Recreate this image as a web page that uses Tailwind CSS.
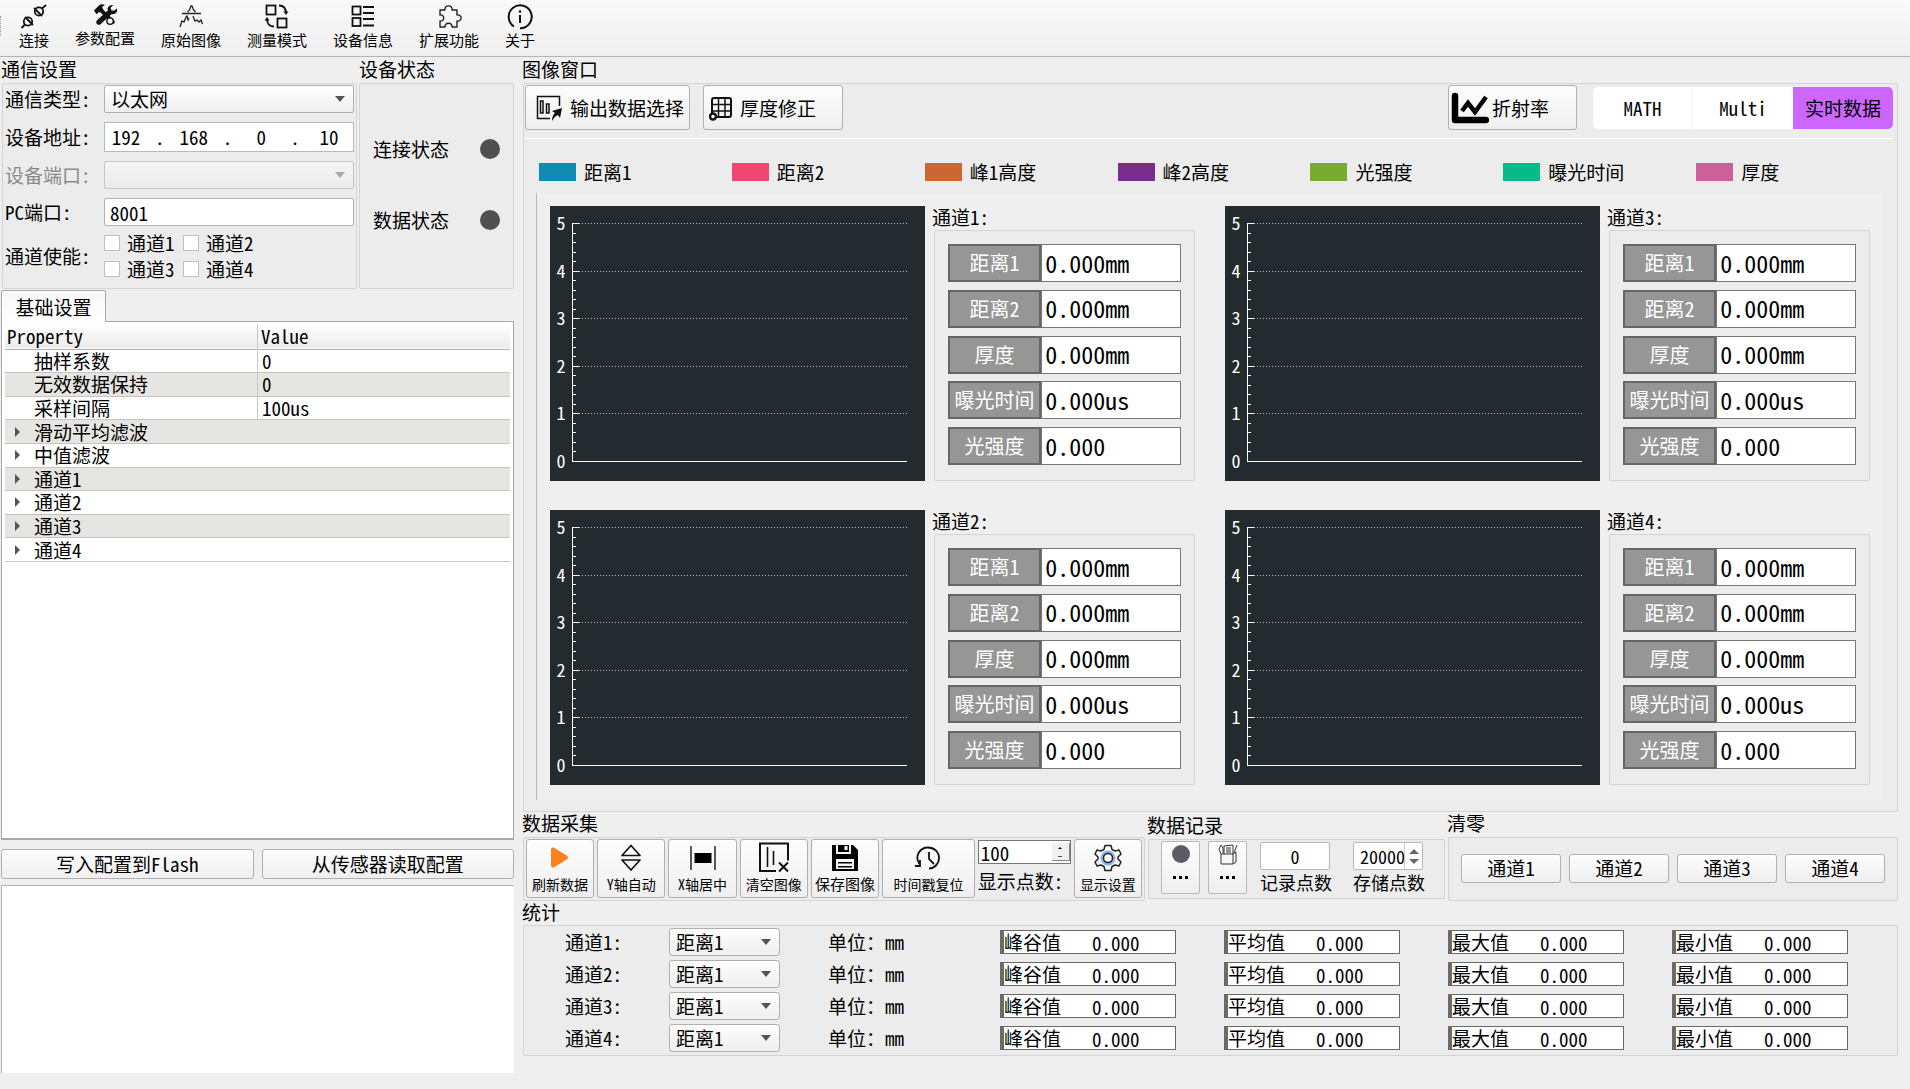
<!DOCTYPE html>
<html lang="zh-CN">
<head>
    <meta charset="UTF-8">
    <meta name="viewport" content="width=device-width, initial-scale=1.0">
    <title>光谱共焦测量</title>
    <script src="https://cdn.jsdelivr.net/npm/@tailwindcss/browser@4"></script>
</head>
<body class="min-h-screen flex flex-col bg-[#efefef] text-black text-[19px] leading-6 font-['Noto_Sans_Mono_CJK_SC','Noto_Sans_CJK_SC',sans-serif]">
    <!-- 顶部工具栏 -->
    <header class="h-[57px] shrink-0 flex items-start gap-[26px] pt-1 pl-[19px] border-b border-[#b4b4b4] bg-linear-to-b from-[#fafafa] to-[#efefef] text-[15px] leading-5 relative">
        <span class="absolute left-0 top-4 h-5 border-l border-dotted border-[#999]"></span>
        <button class="flex flex-col items-center">
            <svg class="w-7 h-[26px]" viewBox="0 0 28 26" fill="none" stroke="#111" stroke-width="1.800">
                <circle cx="19" cy="7.500" r="4.200"/><path d="M22 4.500l4-3.500M14 4l8 8"/>
                <circle cx="8" cy="17.500" r="4.200"/><path d="M5 20.500L1.500 24M5 13l8 8"/>
            </svg>
            连接
        </button>
        <button class="flex flex-col items-center">
            <svg class="w-7 h-6" viewBox="0 0 28 26" fill="#111">
                <path d="M2 7l6-6c2-1 4-1 6 0l-3 2 1 3 12 12c2 2-1 5-3 3L9 9 7 9 5 11z"/>
                <path d="M27 5c1 4-2 7-6 6L10 21c-3 4-8-1-4-4L17 7c-1-4 2-6 6-6l-3 3 1 3 3 0z"/>
                <circle cx="19.500" cy="18.500" r="3.500" fill="#f4f4f4" stroke="#111" stroke-width="1.500"/>
            </svg>
            参数配置
        </button>
        <button class="flex flex-col items-center">
            <svg class="w-7 h-[26px]" viewBox="0 0 28 26" fill="none" stroke="#222" stroke-width="1.300">
                <path d="M5 9.500h19M10.500 8l2-2 1.500-4h1l1.500 4 2 2"/>
                <path d="M3 23l2-6 2 1 2-5 1-1 1 4 1-2M25.500 20l-1.500-4-2 2-2-2-2 1-2-5"/>
            </svg>
            原始图像
        </button>
        <button class="flex flex-col items-center">
            <svg class="w-7 h-[26px]" viewBox="0 0 28 26" fill="none" stroke="#111" stroke-width="1.800">
                <rect x="3.500" y="1.500" width="9" height="9"/><rect x="14.500" y="14.500" width="9" height="9"/>
                <path d="M16 1.500c4 0 7 2 7 8M4 14.500c0 6 3 8 7 8"/><path d="M20.500 7.500h5L23 11zM1.500 16.500h5L4 13z" fill="#111" stroke="none"/>
            </svg>
            测量模式
        </button>
        <button class="flex flex-col items-center">
            <svg class="w-7 h-[26px]" viewBox="0 0 28 26" fill="none" stroke="#111" stroke-width="1.800">
                <rect x="3.500" y="2.500" width="8" height="8"/><rect x="3.500" y="14" width="8" height="8"/>
                <path d="M14 3h11M14 9h11M14 15h11M14 21.500h11"/>
            </svg>
            设备信息
        </button>
        <button class="flex flex-col items-center">
            <svg class="w-7 h-[26px]" viewBox="0 0 28 26" fill="none" stroke="#222" stroke-width="1.400" stroke-linejoin="round">
                <path d="M5 6h5c-1.500-5.500 8.500-5.500 7 0h5v5c5.500-1 5.500 7 0 6v6h-5c1-5-8-5-7 0H5v-6c5 1 5-7 0-6z"/>
            </svg>
            扩展功能
        </button>
        <button class="flex flex-col items-center">
            <svg class="w-7 h-[26px]" viewBox="0 0 28 26" fill="none" stroke="#111" stroke-width="2">
                <path d="M8 22.500A11.500 11.500 0 1 1 14 24.300M5.500 20.500l1.500 1.500"/><path d="M14 11v8"/><circle cx="14" cy="7.500" r="1.300" fill="#111" stroke="none"/>
            </svg>
            关于
        </button>
    </header>

    <main class="flex-1 flex gap-[9px] pr-3">
        <!-- 左侧面板 -->
        <aside class="w-[514px] shrink-0 flex flex-col pl-px pb-4">
            <div class="flex gap-[2px]">
                <section class="w-[356px]">
                    <h2 class="h-[26px]">通信设置</h2>
                    <div class="border border-[#d4d4d4] rounded-xs bg-[#ececec] pt-px pb-[11px] pl-[2px] pr-[2px] ml-px grid grid-cols-[99px_1fr] gap-y-[9px] items-center">
                        <label for="type">通信类型:</label>
                        <div class="relative h-7">
                            <select id="type" class="appearance-none w-full h-full pl-[6px] border border-[#b0b0b0] rounded-xs bg-linear-to-b from-white to-[#efefef]"><option>以太网</option></select>
                            <span class="absolute right-[9px] top-[11px] border-x-[5px] border-x-transparent border-t-[6px] border-t-[#555] pointer-events-none"></span>
                        </div>
                        <label for="ip">设备地址:</label>
                        <div class="h-[30px] flex items-center justify-between pl-px pr-1 border border-[#aebcc4] bg-white">
                            <input id="ip" value="192" class="w-10 text-center outline-none">.
                            <input aria-label="地址段2" value="168" class="w-10 text-center outline-none">.
                            <input aria-label="地址段3" value="0" class="w-10 text-center outline-none">.
                            <input aria-label="地址段4" value="10" class="w-10 text-center outline-none">
                        </div>
                        <label for="port" class="text-[#8a8a8a]">设备端口:</label>
                        <div class="relative h-7">
                            <select id="port" disabled class="appearance-none w-full h-full border border-[#c6c6c6] rounded-xs bg-linear-to-b from-[#f4f4f4] to-[#ececec]"></select>
                            <span class="absolute right-[9px] top-[11px] border-x-[5px] border-x-transparent border-t-[6px] border-t-[#aaa] pointer-events-none"></span>
                        </div>
                        <label for="pcport">PC端口:</label>
                        <input id="pcport" value="8001" class="w-full h-7 pl-[5px] border border-[#b4b4b4] rounded-xs bg-white">
                        <span>通道使能:</span>
                        <div class="h-[42px] grid grid-cols-[79px_79px] content-between leading-4">
                            <label class="flex items-center gap-[7px]"><input type="checkbox" class="appearance-none size-4 shrink-0 border border-[#c0c0c0] bg-white">通道1</label>
                            <label class="flex items-center gap-[7px]"><input type="checkbox" class="appearance-none size-4 shrink-0 border border-[#c0c0c0] bg-white">通道2</label>
                            <label class="flex items-center gap-[7px]"><input type="checkbox" class="appearance-none size-4 shrink-0 border border-[#c0c0c0] bg-white">通道3</label>
                            <label class="flex items-center gap-[7px]"><input type="checkbox" class="appearance-none size-4 shrink-0 border border-[#c0c0c0] bg-white">通道4</label>
                        </div>
                    </div>
                </section>
                <section class="flex-1 flex flex-col">
                    <h2 class="h-[26px]">设备状态</h2>
                    <div class="flex-1 flex flex-col gap-[47px] justify-center border border-[#d4d4d4] rounded-xs bg-[#ececec] px-[13px] pb-[3px]">
                        <div class="flex items-center justify-between">连接状态<span class="size-5 rounded-full bg-[#505050]"></span></div>
                        <div class="flex items-center justify-between">数据状态<span class="size-5 rounded-full bg-[#505050]"></span></div>
                    </div>
                </section>
            </div>

            <div class="mt-px flex"><button class="relative z-10 -mb-px w-[105px] h-8 border border-b-0 border-[#a8a8a8] rounded-t-xs bg-linear-to-b from-[#f8f8f8] to-white">基础设置</button></div>
            <div class="flex-1 border border-[#a8a8a8] border-b-2 bg-white px-[3px] pt-[2px]">
                <table class="w-full h-[238px] border-collapse leading-[22px]">
                    <thead>
                        <tr class="h-[25px] text-left border-b border-[#b0b0b0] bg-linear-to-b from-white to-[#ebebeb]">
                            <th class="w-1/2 p-0 pl-[2px] font-normal border-r border-[#c8c8c8]">Property</th>
                            <th class="p-0 pl-[3px] font-normal">Value</th>
                        </tr>
                    </thead>
                    <tbody id="props"></tbody>
                </table>
            </div>
            <div class="mt-[9px] grid grid-cols-2 gap-2">
                <button class="h-[30px] border border-[#b0b0b0] rounded-[3px] bg-linear-to-b from-[#fdfdfd] to-[#efefef]">写入配置到Flash</button>
                <button class="h-[30px] border border-[#b0b0b0] rounded-[3px] bg-linear-to-b from-[#fdfdfd] to-[#efefef]">从传感器读取配置</button>
            </div>
            <textarea aria-label="日志" class="mt-[6px] h-[188px] resize-none border-t border-l border-[#b0b0b0] bg-white"></textarea>
        </aside>

        <!-- 右侧面板 -->
        <div class="flex-1 min-w-0">
            <h2 class="h-[26px] -ml-px">图像窗口</h2>
            <section class="border border-[#d4d4d4] rounded-xs bg-[#ececec] pb-[11px]">
                <div class="ml-px mr-1 pt-px pb-2 flex items-center border-b border-white leading-[22px]">
                    <button class="h-[45px] w-[165px] flex items-center gap-[8px] pl-[10px] border border-[#b0b0b0] rounded-[3px] bg-linear-to-b from-[#fdfdfd] to-[#efefef] whitespace-nowrap">
                        <svg class="w-[26px] h-[26px] shrink-0" viewBox="0 0 26 26" fill="none" stroke="#111" stroke-width="1.500">
                            <path d="M14 23.500H1.500v-22h22V11"/><rect x="4.500" y="6" width="2.500" height="12"/><rect x="10.500" y="9" width="2.500" height="9"/>
                            <path d="M16 26c0-4 1-6 3-8l-3-2 10-3-2 10-2-3c-3 1-4 3-6 6z" fill="#111" stroke="none"/>
                        </svg>
                        输出数据选择
                    </button>
                    <button class="ml-[13px] h-[45px] w-[140px] flex items-center gap-[7px] pl-[5px] border border-[#b0b0b0] rounded-[3px] bg-linear-to-b from-[#fdfdfd] to-[#efefef]">
                        <svg class="w-6 h-[26px]" viewBox="0 0 24 26" fill="none" stroke="#111" stroke-width="2">
                            <rect x="3" y="3" width="19" height="19" rx="2"/><path d="M9.500 3v19M16 3v19M3 9.500h19M3 16h19" stroke-width="1.500"/>
                            <circle cx="4" cy="21.500" r="3" fill="#fff" stroke-width="2.500"/>
                        </svg>
                        厚度修正
                    </button>
                    <button class="ml-auto h-[45px] w-[129px] flex items-center gap-[3px] pl-[2px] border border-[#b0b0b0] rounded-[3px] bg-linear-to-b from-[#fdfdfd] to-[#efefef]">
                        <svg class="w-[38px] h-8" viewBox="0 0 38 32" fill="none" stroke="#000" stroke-linecap="round">
                            <path d="M4 4v24h31" stroke-width="6.500" stroke-linejoin="round"/><path d="M11 19l6-8 7 9L35 5" stroke-width="4.500" stroke-linecap="butt"/>
                        </svg>
                        折射率
                    </button>
                    <div class="ml-4 w-[300px] h-[42px] grid grid-cols-3 rounded-[5px] overflow-hidden bg-white">
                        <button class="border-r border-[#f2f2f2]">MATH</button>
                        <button>Multi</button>
                        <button class="bg-[#cc66ff]">实时数据</button>
                    </div>
                </div>

                <div class="pl-[15px] pr-2 pt-3 h-[54px] grid grid-cols-7 items-center">
                    <div class="flex items-center gap-2"><span class="w-[37px] h-[18px] bg-[#108bb4]"></span>距离1</div>
                    <div class="flex items-center gap-2"><span class="w-[37px] h-[18px] bg-[#ef476f]"></span>距离2</div>
                    <div class="flex items-center gap-2"><span class="w-[37px] h-[18px] bg-[#cc6633]"></span>峰1高度</div>
                    <div class="flex items-center gap-2"><span class="w-[37px] h-[18px] bg-[#7b2d8e]"></span>峰2高度</div>
                    <div class="flex items-center gap-2"><span class="w-[37px] h-[18px] bg-[#77ac30]"></span>光强度</div>
                    <div class="flex items-center gap-2"><span class="w-[37px] h-[18px] bg-[#06ba8a]"></span>曝光时间</div>
                    <div class="flex items-center gap-2"><span class="w-[37px] h-[18px] bg-[#cc6199]"></span>厚度</div>
                </div>

                <div id="channels" class="ml-3 mr-[14px] px-[13px] pt-[13px] pb-[15px] border-l border-[#b8b8b8] bg-[#efefef] grid grid-cols-2 gap-x-[30px] gap-y-[29px]"></div>
            </section>

            <div class="flex gap-[3px]">
                <section class="w-[622px] shrink-0">
                    <h2 class="h-[25px] leading-[22px] -ml-px">数据采集</h2>
                    <div class="h-16 flex items-start gap-[3px] pt-px px-[2px] border border-[#d4d4d4] rounded-xs bg-[#ececec] text-[14px] leading-5 whitespace-nowrap">
                        <button class="flex-[68] h-[59px] flex flex-col items-center justify-between pt-1 pb-[3px] border border-[#b0b0b0] rounded-[3px] bg-linear-to-b from-[#fdfdfd] to-[#efefef]">
                            <svg class="w-8 h-[28px]" viewBox="0 0 32 28"><path d="M9 5.500l13 8L9 21.500z" fill="#ff7f1e" stroke="#ff7f1e" stroke-width="4" stroke-linejoin="round"/></svg>
                            刷新数据
                        </button>
                        <button class="flex-[68] h-[59px] flex flex-col items-center justify-between pt-1 pb-[3px] border border-[#b0b0b0] rounded-[3px] bg-linear-to-b from-[#fdfdfd] to-[#efefef]">
                            <svg class="w-8 h-[28px]" viewBox="0 0 32 28" fill="none" stroke="#111" stroke-width="1.700" stroke-linejoin="round"><path d="M16 1.500l9 10H7zM7 16h18l-9 10z"/></svg>
                            Y轴自动
                        </button>
                        <button class="flex-[68] h-[59px] flex flex-col items-center justify-between pt-1 pb-[3px] border border-[#b0b0b0] rounded-[3px] bg-linear-to-b from-[#fdfdfd] to-[#efefef]">
                            <svg class="w-8 h-[28px]" viewBox="0 0 32 28"><path d="M4 2v24M28 2v24" stroke="#222" stroke-width="1.500"/><path d="M7.500 9h17v10h-17z"/></svg>
                            X轴居中
                        </button>
                        <button class="flex-[68] h-[59px] flex flex-col items-center justify-between pt-[2px] pb-[3px] border border-[#b0b0b0] rounded-[3px] bg-linear-to-b from-[#fdfdfd] to-[#efefef]">
                            <svg class="w-8 h-[31px]" viewBox="0 0 32 31" fill="none" stroke="#111" stroke-width="2"><path d="M18 29H2V1.500h28v17"/><path d="M9.500 5v20M15.500 9v14" stroke-width="1.600"/><path d="M21 20.500l9 9M30 20.500l-9 9"/></svg>
                            清空图像
                        </button>
                        <button class="flex-[68] h-[59px] flex flex-col items-center justify-between pt-1 pb-[3px] border border-[#b0b0b0] rounded-[3px] bg-linear-to-b from-[#fdfdfd] to-[#efefef] text-[15px]">
                            <svg class="w-8 h-[28px]" viewBox="0 0 32 28" fill="#000"><path fill-rule="evenodd" d="M3 1h4v9h15V1h2l5 5v21H3zM7 15v10h18V15z"/><path d="M9 1h11v7H9z"/><path d="M15.500 2h3v4h-3z" fill="#fff"/><path d="M9 18h14v1.500H9zM9 22h14v1.500H9z"/></svg>
                            保存图像
                        </button>
                        <button class="flex-[93] h-[59px] flex flex-col items-center justify-between pt-1 pb-[3px] border border-[#b0b0b0] rounded-[3px] bg-linear-to-b from-[#fdfdfd] to-[#efefef]">
                            <svg class="w-8 h-[28px]" viewBox="0 0 32 28" fill="none" stroke="#111" stroke-width="1.800"><path d="M7.500 20C2 12 8 3.500 16 3.500c6 0 11 4 11 10.500 0 6-5 10.500-10 10.500M8 16v6H3"/><path d="M17 8v7l5 5"/></svg>
                            时间戳复位
                        </button>
                        <div class="w-[93px] shrink-0 pt-px text-[19px]">
                            <div class="relative h-6 border border-[#777] bg-white">
                                <input id="points" value="100" class="w-full h-full pl-[2px] outline-none">
                                <span class="absolute right-0 top-[2px] w-[18px] h-[18px] flex flex-col items-center justify-center gap-[7px] border-r border-b border-[#888] bg-[#f0f0f0]"><i class="border-x-[2px] border-x-transparent border-b-2 border-b-black"></i><i class="w-1 h-px bg-[#555]"></i></span>
                            </div>
                            <label for="points" class="block mt-[7px]">显示点数:</label>
                        </div>
                        <button class="flex-[68] h-[59px] flex flex-col items-center justify-between pt-1 pb-[3px] border border-[#b0b0b0] rounded-[3px] bg-linear-to-b from-[#fdfdfd] to-[#efefef]">
                            <svg class="w-8 h-[28px]" viewBox="0 0 32 28" fill="none" stroke="#222" stroke-width="1.500" stroke-linejoin="round">
                                <path d="M13 1.500h6l1 4 3 1.500 4-1 2 4-3 3v2l3 3-2 4-4-1-3 1.500-1 4h-6l-1-4L9 21l-4 1-2-4 3-3v-2l-3-3 2-4 4 1 3-1.500z"/>
                                <circle cx="16" cy="14" r="6" stroke="#8ab4e8" stroke-width="3"/><circle cx="16" cy="14" r="4.500"/>
                            </svg>
                            显示设置
                        </button>
                    </div>
                </section>

                <section class="w-[297px] shrink-0 pt-[2px]">
                    <h2 class="h-[25px] leading-[22px] -ml-px">数据记录</h2>
                    <div class="h-[60px] flex items-start pt-px pl-3 border border-[#d4d4d4] rounded-xs bg-[#ececec] text-[18px] leading-6 whitespace-nowrap">
                        <button aria-label="记录" class="w-[39px] h-[53px] flex flex-col items-center gap-[13px] pt-[3px] border border-[#b8b8b8] rounded-xs bg-linear-to-b from-[#fdfdfd] to-[#efefef]">
                            <span class="size-[18px] rounded-full bg-[#5c5c66]"></span>
                            <span class="flex gap-[3px]"><i class="size-[3px] bg-black"></i><i class="size-[3px] bg-black"></i><i class="size-[3px] bg-black"></i></span>
                        </button>
                        <button aria-label="导出" class="ml-2 w-[39px] h-[53px] flex flex-col items-center gap-[11px] pt-[2px] border border-[#b8b8b8] rounded-xs bg-linear-to-b from-[#fdfdfd] to-[#efefef]">
                            <svg class="w-5 h-[21px]" viewBox="0 0 20 21" fill="none" stroke="#333"><path d="M3 10h12v10H3zM15 10l3-2v10l-3 2M3 10L1 5l2-4 2 3v5M6 10V2l9-1v9M8 4h5M8 6h5M8 8h5M16 9l3-8"/></svg>
                            <span class="flex gap-[3px]"><i class="size-[3px] bg-black"></i><i class="size-[3px] bg-black"></i><i class="size-[3px] bg-black"></i></span>
                        </button>
                        <div class="ml-[13px] w-[72px]">
                            <input id="rec" value="0" class="block w-[70px] h-7 mt-px text-center border border-[#b8b8b8] rounded-xs bg-white">
                            <label for="rec" class="block">记录点数</label>
                        </div>
                        <div class="ml-[21px] w-[72px]">
                            <div class="flex w-[70px] h-7 mt-px border border-[#b8b8b8] rounded-xs bg-white">
                                <input id="store" value="20000" class="flex-1 min-w-0 pl-[6px] outline-none">
                                <span class="w-[18px] flex flex-col items-center justify-center gap-[5px] border-l border-[#c8c8c8]"><i class="border-x-[5px] border-x-transparent border-b-[5px] border-b-[#666]"></i><i class="border-x-[5px] border-x-transparent border-t-[5px] border-t-[#666]"></i></span>
                            </div>
                            <label for="store" class="block">存储点数</label>
                        </div>
                    </div>
                </section>

                <section class="flex-1">
                    <h2 class="h-[25px] leading-[22px] -ml-px">清零</h2>
                    <div class="h-16 px-3 pb-[2px] grid grid-cols-4 gap-2 items-center border border-[#d4d4d4] rounded-xs bg-[#ececec]">
                        <button class="h-[29px] leading-[26px] border border-[#b0b0b0] rounded-[3px] bg-linear-to-b from-[#fdfdfd] to-[#efefef]">通道1</button>
                        <button class="h-[29px] leading-[26px] border border-[#b0b0b0] rounded-[3px] bg-linear-to-b from-[#fdfdfd] to-[#efefef]">通道2</button>
                        <button class="h-[29px] leading-[26px] border border-[#b0b0b0] rounded-[3px] bg-linear-to-b from-[#fdfdfd] to-[#efefef]">通道3</button>
                        <button class="h-[29px] leading-[26px] border border-[#b0b0b0] rounded-[3px] bg-linear-to-b from-[#fdfdfd] to-[#efefef]">通道4</button>
                    </div>
                </section>
            </div>

            <h2 class="h-6 leading-[22px] -ml-px">统计</h2>
            <section id="stats" class="border border-[#d4d4d4] rounded-xs bg-[#ececec] pt-[2px] pb-[3px] flex flex-col gap-1"></section>
        </div>
    </main>

    <script>
        // 参数表
        const props = [
            ['抽样系数', '0'], ['无效数据保持', '0'], ['采样间隔', '100us'],
            ['滑动平均滤波'], ['中值滤波'], ['通道1'], ['通道2'], ['通道3'], ['通道4']
        ];
        document.getElementById('props').innerHTML = props.map(([name, value], i) => {
            const bg = i % 2 ? 'bg-[#e7e5e1]' : 'bg-white';
            if (value === undefined) {
                return `<tr class="${bg} border-b border-[#c4c4c4]"><td colspan="2" class="p-0">
                    <div class="flex items-center gap-[14px] pl-[10px]"><i class="border-y-[5px] border-y-transparent border-l-[5px] border-l-[#555]"></i>${name}</div></td></tr>`;
            }
            return `<tr class="${bg} border-b border-[#c4c4c4]"><td class="p-0 pl-[29px] border-r border-[#c8c8c8]">${name}</td><td class="p-0 pl-[4px]">${value}</td></tr>`;
        }).join('');

        // 坐标轴
        function chart() {
            let s = '';
            for (let i = 0; i <= 25; i++) {
                const y = 255 - Math.round(i * 238 / 25);
                s += `<path d="M22 ${y + 0.5}h${i % 5 ? 4 : 7}" stroke="#fff"/>`;
                if (i % 5 === 0) {
                    s += `<path d="M29 ${y + 0.5}H357" stroke="${i ? '#b8bcbd' : '#fff'}" ${i ? 'stroke-dasharray="1 2"' : ''}/>
                        <text x="11" y="${y + 7}" text-anchor="middle" font-size="18" fill="#fff">${i / 5}</text>`;
                }
            }
            return `<svg class="w-full bg-[#242b2e]" viewBox="0 0 375 275" shape-rendering="crispEdges"><path d="M22.500 17v239" stroke="#fff"/>${s}</svg>`;
        }

        const fields = [['距离1', '0.000mm'], ['距离2', '0.000mm'], ['厚度', '0.000mm'], ['曝光时间', '0.000us'], ['光强度', '0.000']];
        document.getElementById('channels').innerHTML = [1, 3, 2, 4].map(ch => `
            <div class="grid grid-cols-[minmax(0,375fr)_minmax(0,263fr)] gap-[7px]">
                ${chart()}
                <div class="flex flex-col">
                    <h3 class="leading-[22px] pb-[2px]">通道${ch}:</h3>
                    <div class="ml-[2px] flex-1 flex flex-col justify-between pt-[13px] pb-[15px] px-[13px] border border-[#d4d4d4] rounded-xs bg-[#ececec]">
                        ${fields.map(([k, v], i) => `
                        <div class="h-[38px] flex">
                            <label for="v${ch}${i}" class="w-2/5 flex items-center justify-center border-2 border-[#666] bg-[#969696] text-white text-[20px] whitespace-nowrap">${k}</label>
                            <input id="v${ch}${i}" readonly value="${v}" class="flex-1 min-w-0 pl-[3px] pb-[2px] border border-[#777] bg-white text-[24px]">
                        </div>`).join('')}
                    </div>
                </div>
            </div>`).join('');

        // 统计行
        document.getElementById('stats').innerHTML = [1, 2, 3, 4].map(ch => `
            <div class="h-7 pl-[41px] pr-[49px] flex items-center leading-[22px]">
                <label for="s${ch}" class="w-[104px]">通道${ch}:</label>
                <div class="relative w-[111px] h-[28px]">
                    <select id="s${ch}" class="appearance-none w-full h-full pl-[6px] border border-[#b0b0b0] rounded-[3px] bg-linear-to-b from-[#fdfdfd] to-[#efefef]"><option>距离1</option></select>
                    <span class="absolute right-[9px] top-[11px] border-x-[5px] border-x-transparent border-t-[6px] border-t-[#555] pointer-events-none"></span>
                </div>
                <span class="ml-12 w-[172px]">单位：mm</span>
                <div class="flex-1 grid grid-cols-4 gap-12">
                    ${['峰谷值', '平均值', '最大值', '最小值'].map((k, i) => `
                    <div class="h-6 flex items-center border border-l-4 border-[#6a6a6a] bg-white">
                        <label for="t${ch}${i}" class="w-[88px]">${k}</label>
                        <input id="t${ch}${i}" readonly value="0.000" class="flex-1 min-w-0 h-full">
                    </div>`).join('')}
                </div>
            </div>`).join('');
    </script>
</body>
</html>
